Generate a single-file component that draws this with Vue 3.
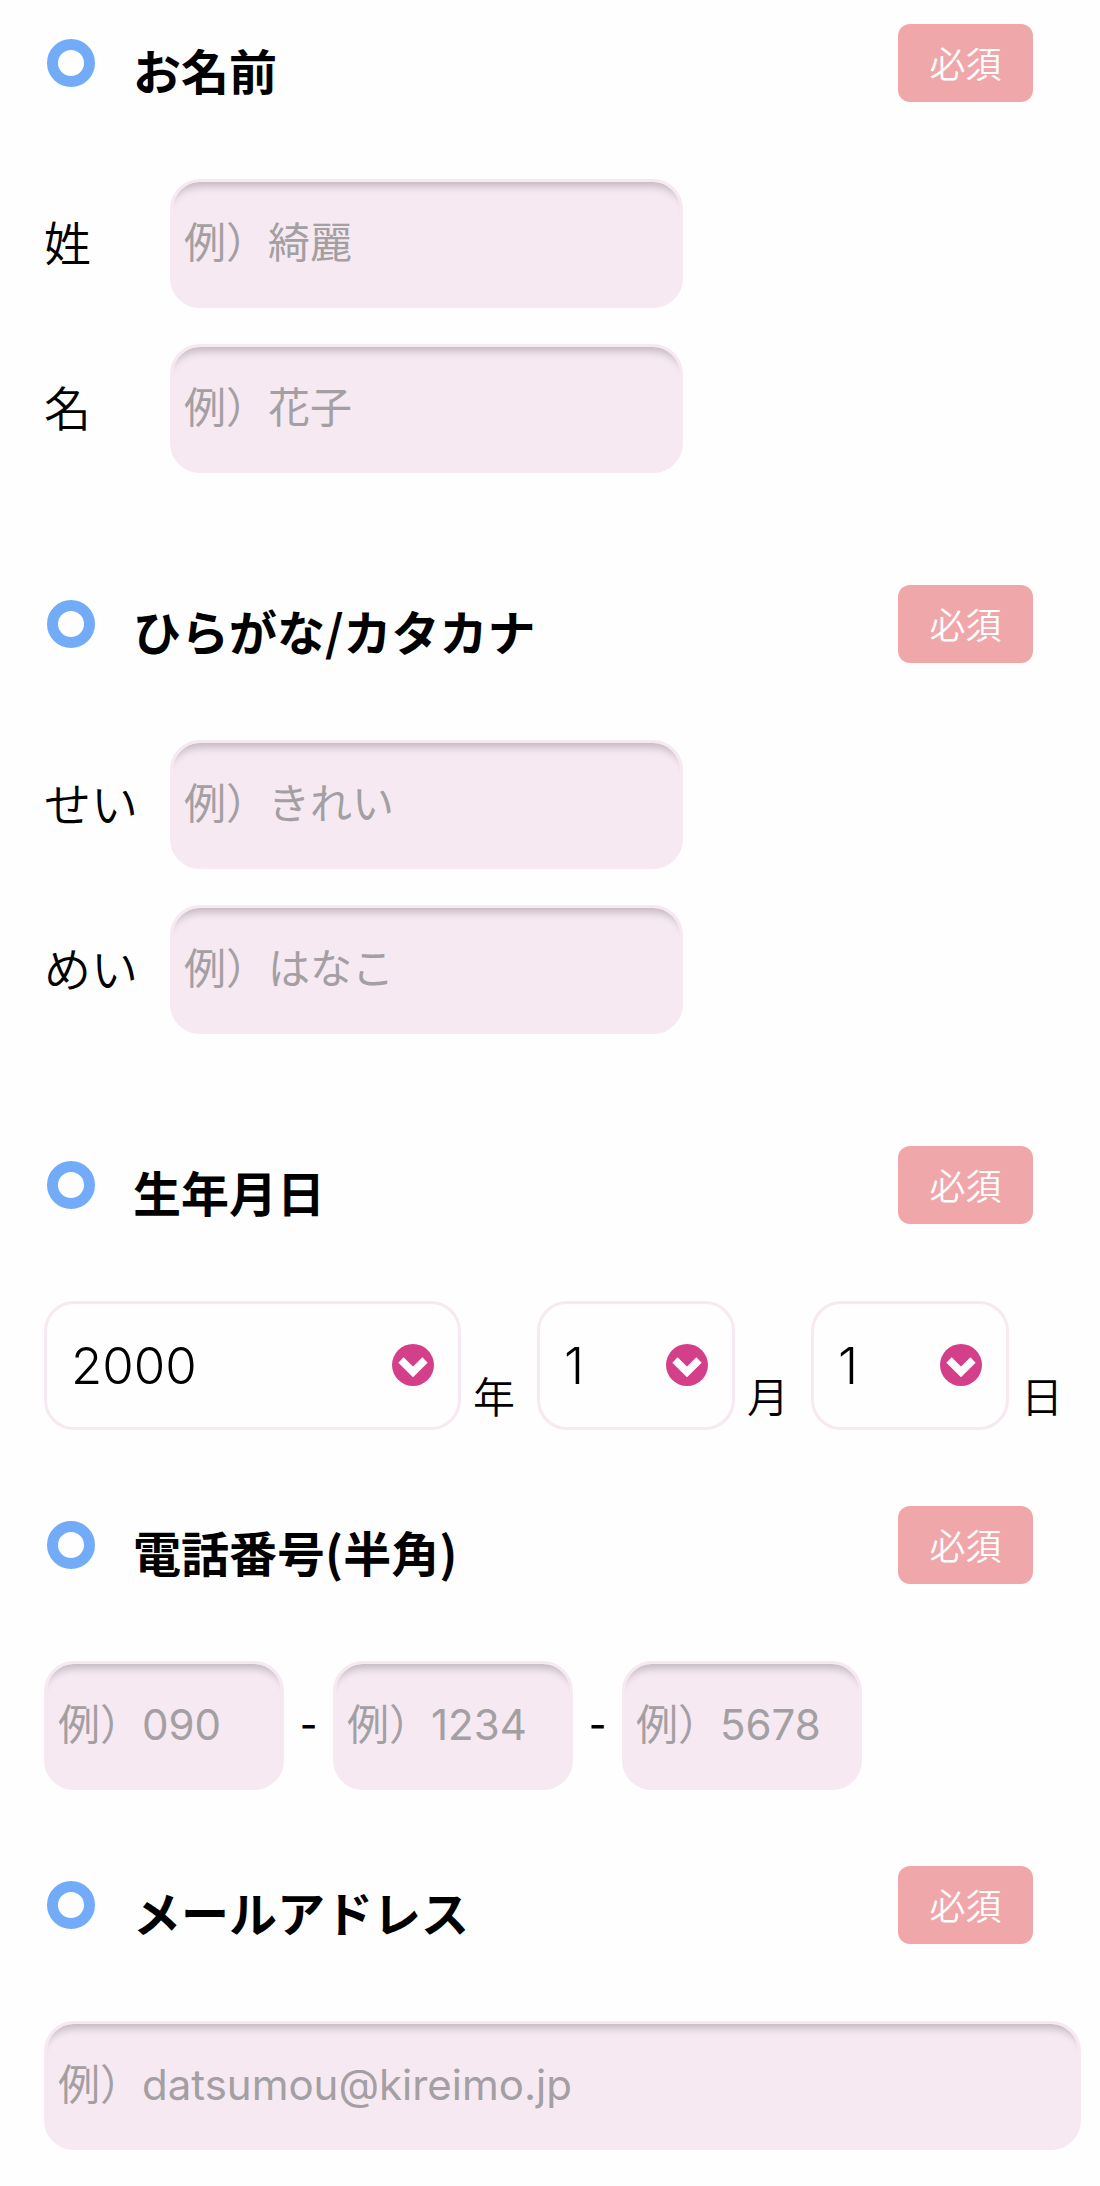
<script setup>
import { ref } from 'vue'

const nameSections = [
  {
    id: 'name',
    title: 'お名前',
    rows: [
      { id: 'sei', label: '姓', placeholder: '例）綺麗' },
      { id: 'mei', label: '名', placeholder: '例）花子' },
    ],
  },
  {
    id: 'kana',
    title: 'ひらがな/カタカナ',
    rows: [
      { id: 'sei-kana', label: 'せい', placeholder: '例）きれい' },
      { id: 'mei-kana', label: 'めい', placeholder: '例）はなこ' },
    ],
  },
]

const range = (from, to) => Array.from({ length: to - from + 1 }, (_, i) => from + i)

const birthParts = [
  { id: 'year', unit: '年', wide: true, options: range(1940, 2010) },
  { id: 'month', unit: '月', wide: false, options: range(1, 12) },
  { id: 'day', unit: '日', wide: false, options: range(1, 31) },
]
const birth = ref({ year: 2000, month: 1, day: 1 })

const phoneParts = [
  { id: 'tel1', label: '電話番号1', placeholder: '例）090' },
  { id: 'tel2', label: '電話番号2', placeholder: '例）1234' },
  { id: 'tel3', label: '電話番号3', placeholder: '例）5678' },
]
</script>

<template>
  <form class="form" @submit.prevent>
    <section v-for="section in nameSections" :key="section.id" class="section">
      <header class="head">
        <span class="ring"></span>
        <h2 class="title">{{ section.title }}</h2>
        <span class="badge">必須</span>
      </header>
      <div class="rows">
        <div v-for="row in section.rows" :key="row.id" class="row">
          <label class="label" :for="row.id">{{ row.label }}</label>
          <input :id="row.id" class="field name-field" type="text" :placeholder="row.placeholder" />
        </div>
      </div>
    </section>

    <section class="section">
      <header class="head">
        <span class="ring"></span>
        <h2 class="title">生年月日</h2>
        <span class="badge">必須</span>
      </header>
      <div class="birth">
        <div v-for="part in birthParts" :key="part.id" class="part">
          <div class="picker" :class="{ wide: part.wide }">
            <select :id="part.id" v-model="birth[part.id]" class="select">
              <option v-for="n in part.options" :key="n" :value="n">{{ n }}</option>
            </select>
            <svg class="arrow" viewBox="0 0 42 42" aria-hidden="true">
              <circle cx="21" cy="21" r="21" fill="#d43f8a" />
              <path d="M9 16 L21 28 L33 16" fill="none" stroke="#fff" stroke-width="7.5" />
            </svg>
          </div>
          <label class="unit" :for="part.id">{{ part.unit }}</label>
        </div>
      </div>
    </section>

    <section class="section">
      <header class="head">
        <span class="ring"></span>
        <h2 class="title">電話番号(半角)</h2>
        <span class="badge">必須</span>
      </header>
      <div class="phone">
        <template v-for="(part, i) in phoneParts" :key="part.id">
          <span v-if="i > 0" class="dash">-</span>
          <input class="field phone-field" type="tel" :aria-label="part.label" :placeholder="part.placeholder" />
        </template>
      </div>
    </section>

    <section class="section">
      <header class="head">
        <span class="ring"></span>
        <h2 class="title"><label for="email">メールアドレス</label></h2>
        <span class="badge">必須</span>
      </header>
      <input id="email" class="field" type="email" placeholder="例）datsumou@kireimo.jp" />
    </section>
  </form>
</template>

<style>
body {
  background: #fefefe;
}
</style>

<style scoped>
.form {
  box-sizing: border-box;
  padding: 24px 19px 36px 44px;
  display: flex;
  flex-direction: column;
  gap: 76px;
  color: #000;
  font-family: "Noto Sans CJK JP", sans-serif;
  font-weight: 350;
}

.head {
  display: flex;
  align-items: center;
  height: 78px;
  margin-bottom: 77px;
  padding-right: 48px;
}

.ring {
  box-sizing: border-box;
  flex: none;
  width: 48px;
  height: 48px;
  margin: 0 38px 0 3px;
  border: 11px solid #72acf8;
  border-radius: 50%;
}

.title {
  flex: 1;
  margin: 0;
  padding-top: 12px;
  font-size: 48px;
  line-height: 64px;
  font-weight: 700;
}

.badge {
  flex: none;
  width: 135px;
  border-radius: 12px;
  background: #f0a7aa;
  color: #fff;
  font-size: 36px;
  line-height: 76px;
  padding-bottom: 2px;
  text-align: center;
}

.rows {
  display: flex;
  flex-direction: column;
  gap: 36px;
  padding-bottom: 36px;
}

.row {
  display: flex;
  align-items: center;
}

.label {
  flex: none;
  width: 126px;
  padding-bottom: 6px;
  font-size: 47px;
  line-height: 64px;
}

.field {
  box-sizing: border-box;
  display: block;
  width: 100%;
  height: 129px;
  margin: 0;
  padding: 0 11px 2px;
  border: 3px solid #f6e9f2;
  border-radius: 30px;
  background: #f6e9f2;
  box-shadow: inset 0 14px 8px -10px rgba(0, 0, 0, 0.22);
  color: #000;
  font-family: Inter, "Noto Sans CJK JP", sans-serif;
  font-size: 42px;
  font-weight: 400;
  outline: none;
}

.field::placeholder {
  color: #a39fa2;
  opacity: 1;
}

.name-field {
  max-width: 513px;
}

.birth {
  display: flex;
  gap: 22px;
}

.part {
  display: flex;
  align-items: flex-end;
  gap: 12px;
}

.picker {
  position: relative;
  width: 198px;
}

.picker.wide {
  width: 417px;
}

.select {
  box-sizing: border-box;
  display: block;
  width: 100%;
  height: 129px;
  margin: 0;
  padding: 0 70px 0 24px;
  appearance: none;
  border: 3px solid #f6e9f2;
  border-radius: 30px;
  background: transparent;
  color: #000;
  font-family: Inter, "Noto Sans CJK JP", sans-serif;
  font-size: 51px;
  font-weight: 300;
  outline: none;
}

.arrow {
  position: absolute;
  top: 43px;
  right: 27px;
  width: 42px;
  height: 42px;
  pointer-events: none;
}

.unit {
  padding-bottom: 3px;
  font-size: 42px;
  line-height: 64px;
}

.phone {
  display: flex;
  align-items: center;
}

.phone-field {
  width: 240px;
}

.dash {
  width: 49px;
  padding-bottom: 14px;
  font-size: 48px;
  font-weight: 400;
  line-height: 64px;
  text-align: center;
}
</style>
